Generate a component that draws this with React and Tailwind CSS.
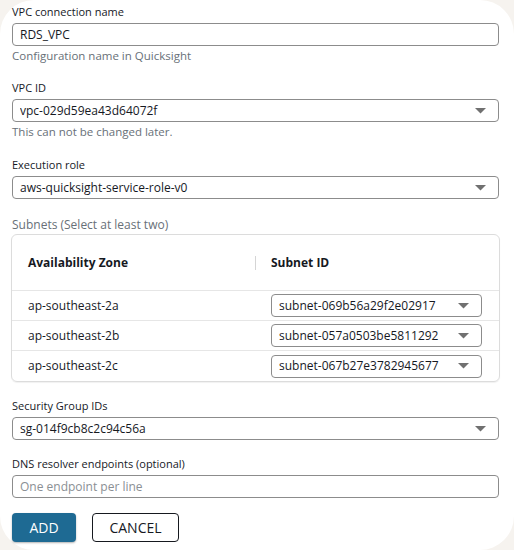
const FONT = { fontFamily: '"Open Sans", "Noto Sans", sans-serif' };

const SUBNETS = [
  { zone: 'ap-southeast-2a', id: 'subnet-069b56a29f2e02917' },
  { zone: 'ap-southeast-2b', id: 'subnet-057a0503be5811292' },
  { zone: 'ap-southeast-2c', id: 'subnet-067b27e3782945677' },
];

function Caret() {
  return (
    <svg width="11" height="6" viewBox="0 0 11 6" className="shrink-0">
      <path d="M0 0h11L5.5 5.5z" fill="#707070" />
    </svg>
  );
}

function Select({ value, className = '' }) {
  return (
    <div className={`flex items-center h-[23px] border border-[#8c8c8c] rounded-[4px] pl-[7px] pr-[12px] ${className}`}>
      <span className="flex-1 text-[12px] text-[#16191f] truncate">{value}</span>
      <Caret />
    </div>
  );
}

function Field({ label, hint, children }) {
  return (
    <div>
      <div className="text-[11px] leading-[14px] mb-[4px] text-[#16191f]">{label}</div>
      {children}
      {hint && <div className="text-[11.5px] leading-[14px] mt-[3px] text-[#687078]">{hint}</div>}
    </div>
  );
}

export default function App() {
  return (
    <div className="w-[514px] h-[550px] bg-[#f6f3ef] overflow-hidden" style={FONT}>
      <div className="w-full h-full bg-white rounded-[34px] pl-[12px] pr-[15px] pt-[5px]">
        <Field label="VPC connection name" hint="Configuration name in Quicksight">
          <div className="flex items-center h-[23px] border border-[#8c8c8c] rounded-[4px] px-[7px] text-[12px] text-[#16191f]">RDS_VPC</div>
        </Field>

        <div className="mt-[18px]">
          <Field label="VPC ID" hint="This can not be changed later.">
            <Select value="vpc-029d59ea43d64072f" />
          </Field>
        </div>

        <div className="mt-[19px]">
          <Field label="Execution role">
            <Select value="aws-quicksight-service-role-v0" />
          </Field>
        </div>

        <div className="mt-[19px]">
          <div className="text-[12px] leading-[14px] mb-[2px] text-[#687078]">Subnets (Select at least two)</div>
          <div className="border border-[#dcdcdc] rounded-[6px] -ml-[1px] -mr-[1px] shadow-[0_1px_1px_rgba(0,0,0,0.06)]">
            <div className="flex items-center h-[56px] border-b border-[#e6e6e6] text-[12px] font-bold text-[#16191f]">
              <div className="w-[243px] pl-[16px]">Availability Zone</div>
              <div className="w-px h-[14px] bg-[#d5d5d5]" />
              <div className="pl-[15px]">Subnet ID</div>
            </div>
            {SUBNETS.map((s, i) => (
              <div key={s.zone} className={`flex items-center h-[30px] ${i < 2 ? 'border-b border-[#e6e6e6]' : ''}`}>
                <div className="w-[259px] pl-[16px] text-[12px] text-[#16191f]">{s.zone}</div>
                <Select value={s.id} className="w-[211px] pr-[10px]" />
              </div>
            ))}
          </div>
        </div>

        <div className="mt-[17px]">
          <Field label="Security Group IDs">
            <Select value="sg-014f9cb8c2c94c56a" />
          </Field>
        </div>

        <div className="mt-[17px]">
          <Field label="DNS resolver endpoints (optional)">
            <div className="flex items-center h-[23px] border border-[#8c8c8c] rounded-[4px] px-[7px] text-[12px] text-[#8a8f94]">One endpoint per line</div>
          </Field>
        </div>

        <div className="flex gap-[16px] mt-[15px]">
          <button className="h-[29px] w-[64px] rounded-[4px] bg-[#1e6a93] text-white text-[14px] shadow-[0_1px_2px_rgba(0,0,0,0.3)]">ADD</button>
          <button className="h-[29px] w-[87px] rounded-[4px] border border-[#16191f] bg-white text-[#16191f] text-[14px]">CANCEL</button>
        </div>
      </div>
    </div>
  );
}
